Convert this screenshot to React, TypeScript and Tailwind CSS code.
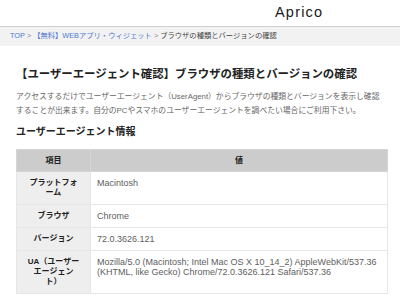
import React from "react";

// User agent check page — breadcrumb, intro text and an info table.

const FONT = {
  fontFamily: '"Liberation Sans", "Noto Sans CJK JP", sans-serif',
};

const ROWS: { label: string[]; value: string }[] = [
  { label: ["プラットフォ", "ーム"], value: "Macintosh" },
  { label: ["ブラウザ"], value: "Chrome" },
  { label: ["バージョン"], value: "72.0.3626.121" },
  {
    label: ["UA（ユーザー", "エージェン", "ト）"],
    value:
      "Mozilla/5.0 (Macintosh; Intel Mac OS X 10_14_2) AppleWebKit/537.36 (KHTML, like Gecko) Chrome/72.0.3626.121 Safari/537.36",
  },
];

export default function App() {
  return (
    <div
      className="w-[400px] h-[303px] overflow-hidden bg-white text-[#222]"
      style={FONT}
    >
      <header className="h-[27px] border-b border-[#cfcfcf] flex items-center">
        <span className="ml-[275px] text-[14.5px] font-medium tracking-[1.2px] text-[#1a1a1a]">
          Aprico
        </span>
      </header>

      <nav className="h-[19px] bg-[#f2f2f2] flex items-center pl-[10px] text-[7.3px] whitespace-nowrap">
        <span className="text-[#4f78d3]">TOP</span>
        <span className="text-[#888] mx-[2px]">&gt;</span>
        <span className="text-[#4f78d3]">【無料】WEBアプリ・ウィジェット</span>
        <span className="text-[#888] mx-[2px]">&gt;</span>
        <span className="text-[#444]">ブラウザの種類とバージョンの確認</span>
      </nav>

      <main className="pl-4 pr-3">
        <h1 className="mt-[19px] text-[11.4px] leading-[18px] font-bold whitespace-nowrap">
          【ユーザーエージェント確認】ブラウザの種類とバージョンの確認
        </h1>
        <p className="mt-[7px] text-[7.8px] leading-[14px] text-[#666] whitespace-nowrap">
          アクセスするだけでユーザーエージェント（UserAgent）からブラウザの種類とバージョンを表示し確認
          <br />
          することが出来ます。自分のPCやスマホのユーザーエージェントを調べたい場合にご利用下さい。
        </p>
        <h2 className="mt-[7px] text-[10px] leading-[14px] font-bold">
          ユーザーエージェント情報
        </h2>

        <table className="mt-[10px] w-[372px] table-fixed border-collapse text-[8px] leading-[10px]">
          <colgroup>
            <col className="w-[74px]" />
            <col />
          </colgroup>
          <thead>
            <tr className="bg-[#cccccc]">
              <th className="h-[22px] border border-[#d6d6d6] font-bold text-center text-[#222]">
                項目
              </th>
              <th className="h-[22px] border border-[#d6d6d6] font-bold text-center text-[#222]">
                値
              </th>
            </tr>
          </thead>
          <tbody>
            {ROWS.map((r) => (
              <tr key={r.value}>
                <th className="align-top border border-[#e6e6e6] bg-[#eeeeee] px-[6px] py-[6px] font-bold text-center text-[#222] whitespace-nowrap">
                  {r.label.map((line) => (
                    <div key={line}>{line}</div>
                  ))}
                </th>
                <td className="align-top border border-[#e6e6e6] bg-white pl-[6px] pr-[4px] py-[6px] text-[9px] leading-[10px] text-[#5e5e5e]">
                  {r.value}
                </td>
              </tr>
            ))}
          </tbody>
        </table>
      </main>
    </div>
  );
}
